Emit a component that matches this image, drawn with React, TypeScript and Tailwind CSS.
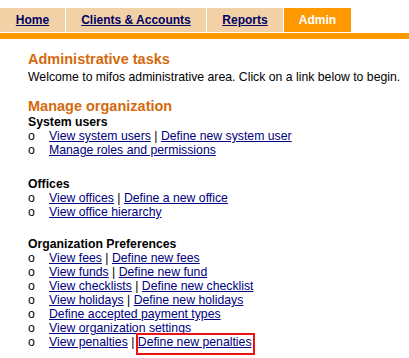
import React from 'react';

const font = { fontFamily: '"Liberation Sans", Arial, sans-serif' };

function Links({ items }: { items: { label: string; boxed?: boolean }[] }) {
  return (
    <span>
      {items.map((it, i) => (
        <React.Fragment key={it.label}>
          {i > 0 && <span className="text-black"> | </span>}
          {it.boxed ? (
            <span className="relative">
              <a href="#" className="text-[#000080] underline">{it.label}</a>
              <span className="absolute left-[-2px] top-[-2px] right-[-3px] bottom-[-6px] border-2 border-[#ee1111]" />
            </span>
          ) : (
            <a href="#" className="text-[#000080] underline">{it.label}</a>
          )}
        </React.Fragment>
      ))}
    </span>
  );
}

function Row({ items }: { items: { label: string; boxed?: boolean }[] }) {
  return (
    <div className="flex leading-[14px]">
      <span className="w-[21px] shrink-0 text-black">o</span>
      <Links items={items} />
    </div>
  );
}

const tabs = [
  { label: 'Home', w: 'w-[65px]' },
  { label: 'Clients & Accounts', w: 'w-[140px]' },
  { label: 'Reports', w: 'w-[76px]' },
];

export default function App() {
  return (
    <div className="min-h-[358px] w-[409px] bg-white text-[12px] text-black" style={font}>
      <div className="flex gap-px pt-[8px]">
        {tabs.map((t) => (
          <div key={t.label} className={`${t.w} h-[24px] bg-[#f3d1a6] text-center font-bold leading-[24px]`}>
            <a href="#" className="text-[#000066] underline">{t.label}</a>
          </div>
        ))}
        <div className="w-[67px] h-[24px] bg-[#ff9900] text-center font-bold leading-[24px] text-white">Admin</div>
      </div>
      <div className="mt-px h-[6px] bg-[#ff9900]" />

      <div className="pl-[28px] text-[12.25px]">
        <div className="mt-[12px] text-[14.5px] font-bold leading-[17px] text-[#d46a0c]">Administrative tasks</div>
        <div className="mt-[2px] leading-[14px]">Welcome to mifos administrative area. Click on a link below to begin.</div>

        <div className="mt-[14px] text-[14.5px] font-bold leading-[17px] text-[#d46a0c]">Manage organization</div>
        <div className="font-bold leading-[14px]">System users</div>
        <Row items={[{ label: 'View system users' }, { label: 'Define new system user' }]} />
        <Row items={[{ label: 'Manage roles and permissions' }]} />

        <div className="mt-[20px] font-bold leading-[14px]">Offices</div>
        <Row items={[{ label: 'View offices' }, { label: 'Define a new office' }]} />
        <Row items={[{ label: 'View office hierarchy' }]} />

        <div className="mt-[18px] font-bold leading-[14px]">Organization Preferences</div>
        <Row items={[{ label: 'View fees' }, { label: 'Define new fees' }]} />
        <Row items={[{ label: 'View funds' }, { label: 'Define new fund' }]} />
        <Row items={[{ label: 'View checklists' }, { label: 'Define new checklist' }]} />
        <Row items={[{ label: 'View holidays' }, { label: 'Define new holidays' }]} />
        <Row items={[{ label: 'Define accepted payment types' }]} />
        <Row items={[{ label: 'View organization settings' }]} />
        <Row items={[{ label: 'View penalties' }, { label: 'Define new penalties', boxed: true }]} />
      </div>
    </div>
  );
}
